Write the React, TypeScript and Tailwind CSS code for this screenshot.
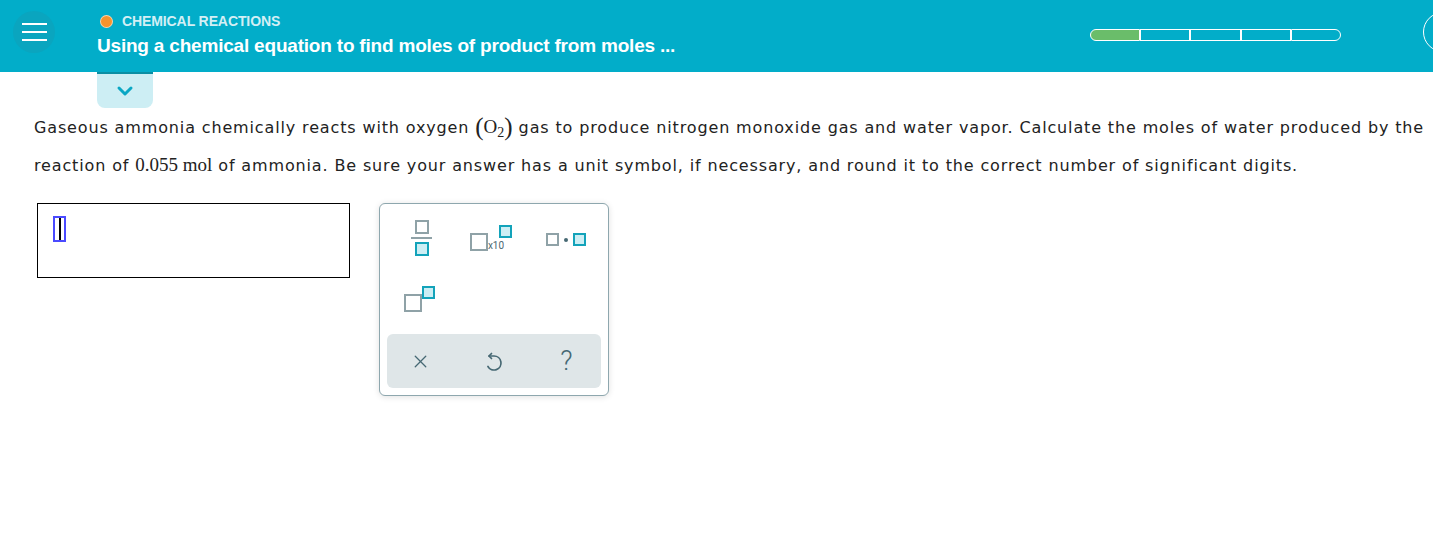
import { ChevronDown, X } from "lucide-react"

function GraySq({ className }: { className: string }) {
  return <div className={"border-2 border-[#8fa2a7] bg-white " + className} />
}

function TealSq({ className }: { className: string }) {
  return <div className={"border-2 border-[#13a3ba] bg-[#cdeef4] " + className} />
}

function UndoIcon() {
  return (
    <svg width="24" height="24" viewBox="0 0 24 24" fill="none" stroke="currentColor" strokeWidth="1.7" strokeLinecap="round" strokeLinejoin="round">
      <path d="M7 7h5a7 7 0 1 1 -6.06 10.5" />
      <path d="M9.5 4.5 L7 7 L9.5 9.5" />
    </svg>
  )
}

function ProgressBar() {
  return (
    <div className="flex h-[12px] w-[251px] mt-[29px]">
      <div className="h-full w-[50px] rounded-l-full border border-white bg-[#6abd6a]" />
      <div className="h-full w-[50px] border border-white" />
      <div className="h-full w-[51px] border border-white" />
      <div className="h-full w-[50px] border border-white" />
      <div className="h-full w-[50px] rounded-r-full border border-white" />
    </div>
  )
}

function Keypad() {
  return (
    <div className="w-[230px] h-[193px] rounded-md border border-[#8ea7ae] bg-white shadow-[0_1px_6px_rgba(0,0,0,0.12)] px-[7px] pt-[14px]">
      <div className="grid grid-cols-3 h-[116px] grid-rows-[60px_56px]">
        <div className="flex justify-center">
          <div className="flex flex-col items-center pt-[2px] -ml-[2px]">
            <GraySq className="w-[14px] h-[14px]" />
            <div className="w-[21px] h-[2px] bg-[#8fa2a7] my-[3px]" />
            <TealSq className="w-[14px] h-[14px]" />
          </div>
        </div>
        <div className="flex justify-center">
          <div className="flex items-start pt-[7px] -ml-[6px]">
            <GraySq className="w-[18px] h-[18px] mt-[8px]" />
            <span className="mt-[16px] text-[10px] leading-none text-[#4b6670] font-['Roboto',sans-serif]">x10</span>
            <TealSq className="w-[13px] h-[13px] -ml-[5px]" />
          </div>
        </div>
        <div className="flex justify-center">
          <div className="flex items-center gap-[5px] h-[13px] mt-[15px] ml-[2px]">
            <GraySq className="w-[13px] h-[13px]" />
            <div className="w-[4px] h-[4px] rounded-full bg-[#466873]" />
            <TealSq className="w-[13px] h-[13px]" />
          </div>
        </div>
        <div className="flex justify-center">
          <div className="flex items-start pt-[8px] -ml-[6px]">
            <GraySq className="w-[18px] h-[18px] mt-[8px]" />
            <TealSq className="w-[13px] h-[13px]" />
          </div>
        </div>
      </div>
      <div className="grid grid-cols-3 items-center h-[54px] rounded-md bg-[#dfe6e8] text-[#466873]">
        <div className="flex justify-center -ml-[4px]">
          <X size={21} strokeWidth={1.5} />
        </div>
        <div className="flex justify-center">
          <UndoIcon />
        </div>
        <div className="flex justify-center ml-[2px]">
          <span className="text-[27px] leading-none font-['Roboto',sans-serif] font-light">?</span>
        </div>
      </div>
    </div>
  )
}

export default function App() {
  return (
    <div className="w-[1433px] h-[540px] bg-white overflow-hidden font-['DejaVu_Sans',sans-serif]">
      <header className="flex h-[72px] bg-[#02adc9]">
        <div className="w-[97px] flex justify-start pl-[13px] pt-[11px]">
          <div className="w-[42px] h-[42px] rounded-full bg-[#0aa5bf] flex flex-col items-center justify-center gap-[6px]">
            <div className="w-[25px] h-[2px] bg-white" />
            <div className="w-[25px] h-[2px] bg-white" />
            <div className="w-[25px] h-[2px] bg-white" />
          </div>
        </div>
        <div className="flex-1 pt-[11px] font-['Liberation_Sans',sans-serif]">
          <div className="flex items-center gap-[9px] ml-[3px]">
            <div className="w-[13px] h-[13px] rounded-full bg-[#f7932d] border border-white/60" />
            <span className="text-[14px] font-bold text-[#d3eff5] tracking-[-0.1px]">CHEMICAL REACTIONS</span>
          </div>
          <div className="text-[19px] font-bold text-white tracking-[-0.2px]">
            Using a chemical equation to find moles of product from moles ...
          </div>
        </div>
        <ProgressBar />
        <div className="w-[92px] flex justify-end overflow-hidden">
          <div className="w-[40px] h-[40px] mt-[12px] -mr-[30px] rounded-full border border-white" />
        </div>
      </header>
      <div className="pl-[97px]">
        <div className="w-[56px] h-[2px] bg-[#0b8ea3]" />
        <div className="w-[56px] h-[34px] rounded-b-lg bg-[#cdeef4] flex items-center justify-center">
          <ChevronDown size={24} strokeWidth={3} className="text-[#0aa7c4]" />
        </div>
      </div>
      <div className="pl-[34px] text-[16px] text-[#222] leading-[37px] whitespace-nowrap tracking-[0.86px]">
        <div>
          Gaseous ammonia chemically reacts with oxygen{" "}
          <span className="font-['Liberation_Serif',serif] text-[19px] tracking-normal">
            <span className="text-[25px] align-[-2px]">(</span>O<sub className="text-[14px]">2</sub><span className="text-[25px] align-[-2px]">)</span>
          </span>{" "}
          gas to produce nitrogen monoxide gas and water vapor. Calculate the moles of water produced by the
        </div>
        <div>
          reaction of <span className="font-['Liberation_Serif',serif] text-[19px] tracking-normal">0.055 mol</span> of ammonia. Be sure your answer has a unit symbol, if necessary, and round it to the correct number of significant digits.
        </div>
      </div>
      <div className="flex items-start gap-[29px] pl-[37px] mt-[19px]">
        <div className="w-[313px] h-[75px] border border-black pl-[15px] pt-[12px]">
          <div className="relative w-[13px] h-[26px] border-2 border-[#4a4aff] flex justify-center">
            <div className="w-[2px] h-full bg-black" />
          </div>
        </div>
        <Keypad />
      </div>
    </div>
  )
}
